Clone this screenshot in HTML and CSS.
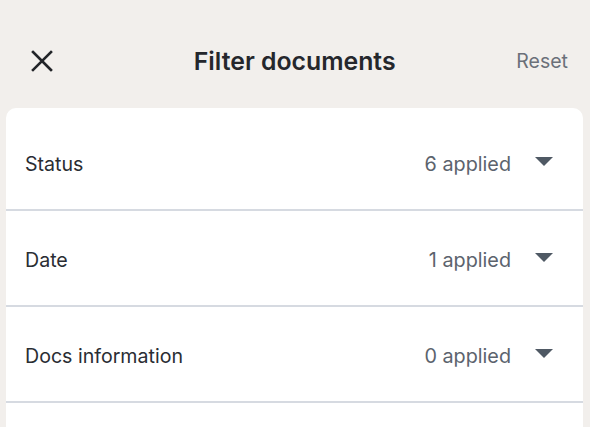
FILE: index.html
```html
<!DOCTYPE html>
<html lang="en">
<head>
    <meta charset="UTF-8">
    <title>Filter documents</title>
    <link rel="stylesheet" href="styles.css">
</head>
<body>
<div class="header">
    <span class="close">
        <svg width="22" height="22" viewBox="0 0 22 22">
            <path d="M2 2 L20 20 M20 2 L2 20" stroke="#222428" stroke-width="2.6" stroke-linecap="square" fill="none"/>
        </svg>
    </span>
    <h1 class="title">Filter documents</h1>
    <span class="reset">Reset</span>
</div>
<div class="card">
    <div class="row">
        <span class="label">Status</span>
        <span class="count">6 applied</span>
        <span class="caret"></span>
    </div>
    <div class="row">
        <span class="label">Date</span>
        <span class="count">1 applied</span>
        <span class="caret"></span>
    </div>
    <div class="row">
        <span class="label">Docs information</span>
        <span class="count">0 applied</span>
        <span class="caret"></span>
    </div>
    <div class="row"></div>
</div>
</body>
</html>
```

FILE: styles.css
```css
*{
    margin: 0;
    padding: 0;
    box-sizing: border-box;
}
body{
    background-color: #f2efec;
    font-family: Inter, "Noto Sans", sans-serif;
    overflow: hidden;
}
.header{
    height: 108px;
    padding: 13px 22px 0 31px;
    display: flex;
    align-items: center;
}
.close{
    width: 22px;
    height: 22px;
    display: block;
}
.close svg{display: block;}
.title{
    flex: 1;
    text-align: center;
    font-size: 24.8px;
    font-weight: 600;
    color: #25272c;
    padding-left: 20px;
}
.reset{
    font-size: 19.5px;
    color: #6b7079;
}
.card{
    margin: 0 7px 0 6px;
    background: #fff;
    border-radius: 10px 10px 0 0;
    padding-top: 7px;
}
.row{
    height: 96px;
    border-bottom: 2px solid #d6dae1;
    display: flex;
    align-items: center;
    padding: 3px 30px 0 19px;
}
.label{
    flex: 1;
    font-size: 19.6px;
    color: #2a2d33;
}
.count{
    font-size: 19.8px;
    color: #5c636d;
    margin-right: 24px;
}
.caret{
    width: 0;
    height: 0;
    border-left: 9px solid transparent;
    border-right: 9px solid transparent;
    border-top: 9px solid #4f5964;
    margin-top: -4px;
}
```
